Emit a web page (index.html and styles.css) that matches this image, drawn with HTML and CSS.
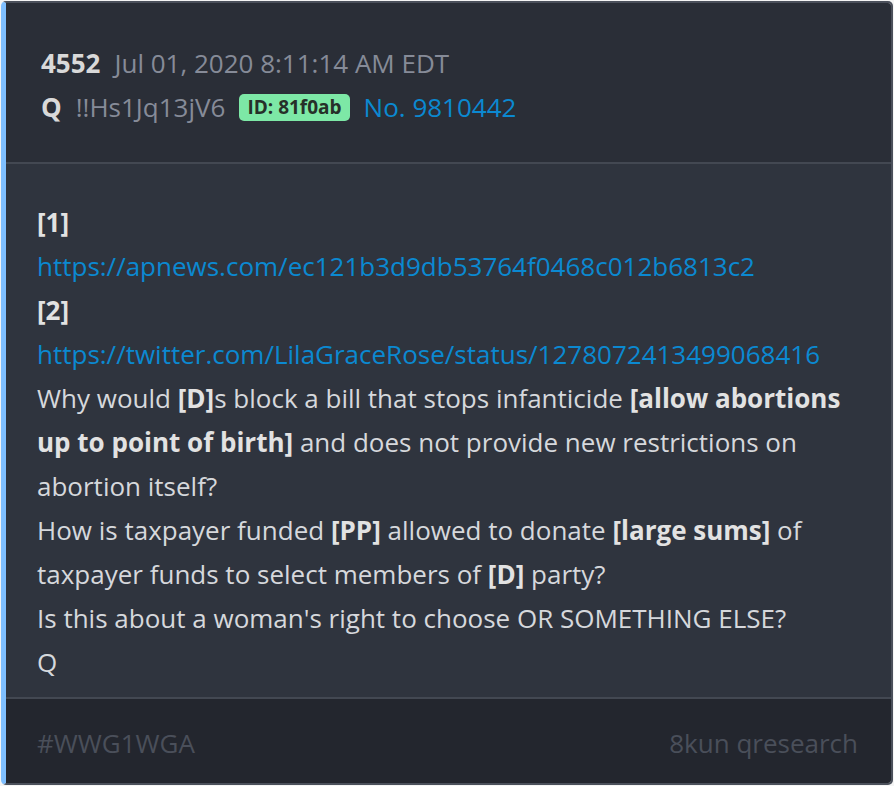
FILE: index.html
```html
<!DOCTYPE html>
<html>
<head>
    <title>Q Drop 4552</title>
    <link rel="stylesheet" href="styles.css">
</head>
<body>
    <div class="post">
        <div class="post-header">
            <div class="meta-row">
                <span class="post-num">4552</span>
                <span class="post-date">Jul 01, 2020 8:11:14 AM EDT</span>
            </div>
            <div class="meta-row">
                <span class="author">Q</span>
                <span class="trip">!!Hs1Jq13jV6</span>
                <span class="user-id">ID: 81f0ab</span>
                <a class="post-no" href="#">No. 9810442</a>
            </div>
        </div>

        <div class="post-body">
            <div><b>[1]</b></div>
            <div><a href="#">https://apnews.com/ec121b3d9db53764f0468c012b6813c2</a></div>
            <div><b>[2]</b></div>
            <div><a href="#">https://twitter.com/LilaGraceRose/status/1278072413499068416</a></div>
            <div>Why would <b>[D]</b>s block a bill that stops infanticide <b>[allow abortions up to point of birth]</b> and does not provide new restrictions on abortion itself?</div>
            <div>How is taxpayer funded <b>[PP]</b> allowed to donate <b>[large sums]</b> of taxpayer funds to select members of <b>[D]</b> party?</div>
            <div>Is this about a woman's right to choose OR SOMETHING ELSE?</div>
            <div>Q</div>
        </div>

        <div class="post-footer">
            <span>#WWG1WGA</span>
            <span>8kun qresearch</span>
        </div>
    </div>
</body>
</html>
```

FILE: styles.css
```css
body {
    margin: 0;
    padding: 1px;
    background-color: #f4f4f4;
    font-family: "Open Sans", "Liberation Sans", sans-serif;
    font-size: 26px;
    line-height: 44px;
}
.post {
    border: 2px solid #4b505b;
    border-left: 5px solid #7fbfff;
    border-radius: 5px;
    overflow: hidden;
    color: #d6d8dc;
}
.post-header {
    background-color: #2a2e37;
    padding: 38px 30px 33px 35px;
    border-bottom: 2px solid #434852;
}
.meta-row {
    display: flex;
    align-items: center;
    gap: 14px;
}
.post-num,
.author {
    font-weight: bold;
    color: #d9d9d9;
}
.post-date,
.trip {
    color: #868b98;
}
.user-id {
    background-color: #7de8a6;
    color: #263029;
    font-weight: bold;
    font-size: 19px;
    line-height: 27px;
    padding: 0 8px;
    border-radius: 5px;
}
a {
    color: #0b89d1;
    text-decoration: none;
}
.post-body {
    background-color: #2f343e;
    padding: 36px 30px 13px 31px;
    border-bottom: 2px solid #434852;
}
.post-body b {
    color: #e2e2e2;
}
.post-footer {
    background-color: #23262e;
    padding: 22px 33px 18px 31px;
    display: flex;
    justify-content: space-between;
    color: #4a4f5a;
}
```
